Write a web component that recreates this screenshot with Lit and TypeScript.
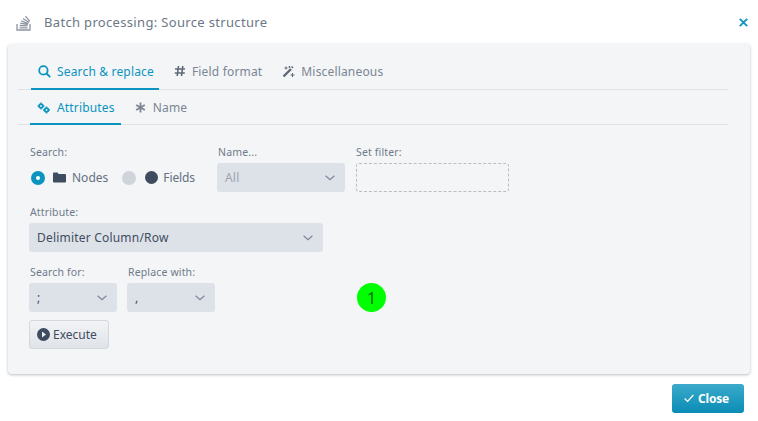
import { LitElement, html, css } from "lit";
import { customElement } from "lit/decorators.js";

const chev = html`<svg class="chev" width="10" height="6" viewBox="0 0 10 6"><path d="M.6.8L5 4.800 9.400.8" fill="none" stroke="#7d8797" stroke-width="1.200"/></svg>`;

@customElement("app-root")
export class AppRoot extends LitElement {
  static styles = css`
    :host { display: block; width: 758px; height: 421px; background: #fff; font-family: "Noto Sans", "Open Sans", sans-serif; color: #3f4b5e; position: relative; overflow: hidden; }
    .head { height: 44px; box-sizing: border-box; display: flex; align-items: center; padding: 0 10px 0 16px; }
    .head .logo { margin-right: 12px; }
    .title { font-size: 13px; letter-spacing: 0.33px; color: #6d7786; flex: 1; }
    .panel { margin: 0 8px; height: 330px; box-sizing: border-box; background: #f3f5f7; border-radius: 4px; box-shadow: 0 1px 3px rgba(60,70,90,.35); padding: 10px 22px 0 10px; }
    .tabs { display: flex; border-bottom: 1px solid #dfe3e8; }
    .tabs.main { height: 35px; padding-left: 13px; }
    .tabs.sub { height: 34px; padding-left: 12px; }
    .tab { display: flex; align-items: center; gap: 6px; font-size: 12px; letter-spacing: .17px; color: #7b8593; padding: 0 5px 0 7px; margin-bottom: -1px; border-bottom: 2px solid transparent; box-sizing: border-box; }
    .tabs.main .tab + .tab { margin-left: 8px; }
    .tabs.sub .tab { gap: 7px; padding: 2px 6px 0 7px; }
    .tabs.sub .tab + .tab { margin-left: 7px; }
    .tab.on { color: #0a94bf; border-bottom-color: #0a94bf; }
    .form { padding: 20px 0 0 11px; font-size: 11px; color: #707a89; }
    .row { display: flex; align-items: flex-start; }
    .field { display: flex; flex-direction: column; }
    label { font-size: 10.5px; letter-spacing: .15px; line-height: 14px; height: 14px; padding-left: 1px; margin-bottom: 4px; display: block; color: #707a89; }
    label.flush { padding-left: 0; }
    .sel { height: 29px; box-sizing: border-box; background: #dde1e8; border-radius: 3px; display: flex; align-items: center; justify-content: space-between; padding: 0 10px 0 8px; font-size: 12px; color: #414d60; letter-spacing: .2px; }
    .sel.dis { color: #9ca4b0; }
    .radios { display: flex; align-items: center; height: 29px; width: 188px; font-size: 12px; color: #66707f; padding-left: 2px; box-sizing: border-box; }
    .radio { width: 14px; height: 14px; border-radius: 50%; background: #cfd3da; flex: none; }
    .radio.on { background: #0a94bf; display: flex; align-items: center; justify-content: center; }
    .radio.on::after { content: ""; width: 4px; height: 4px; border-radius: 50%; background: #fff; }
    .folder { margin: 0 6px 0 8px; }
    .dot { margin: 0 5px 0 9px; }
    .radio.second { margin-left: 14px; }
    .fields { letter-spacing: -.1px; }
    .filter { width: 153px; height: 29px; box-sizing: border-box; border: 1px dashed #b9bec6; border-radius: 3px; }
    .btn { margin-top: 8px; width: 80px; height: 29px; box-sizing: border-box; border: 1px solid #d3d8df; border-radius: 3px; background: linear-gradient(#f2f4f6, #dfe3e8); display: flex; align-items: center; padding-left: 7px; gap: 3px; font-size: 12px; color: #3f4b5e; }
    .gap13 { margin-top: 13px; }
    .gap10 { gap: 10px; }
    .mr11 { margin-right: 11px; }
    .w127 { width: 128px; }
    .w294 { width: 294px; }
    .w88 { width: 88px; }
    .foot { display: flex; justify-content: flex-end; padding: 10px 14px 0 0; }
    .close { width: 72px; height: 29px; box-sizing: border-box; border-radius: 3px; background: linear-gradient(#3caacb, #0a8cb6); color: #fff; font-size: 12px; font-weight: 700; letter-spacing: -.2px; display: flex; align-items: center; padding-left: 12px; gap: 4px; }
    .badge { position: absolute; left: 357px; top: 283px; width: 29px; height: 29px; border-radius: 50%; background: #00ff00; color: #0a6b0a; font-size: 16px; display: flex; align-items: center; justify-content: center; }
  `;
  render() {
    return html`
      <div class="head">
        <svg class="logo" width="16" height="17" viewBox="0 0 16 17" fill="none" stroke="#8d95a2" stroke-width="1.300">
          <path d="M1 10v6h13v-6"/><path d="M3.500 13.800h8M3.700 11.500l7.800.4M4.200 9.200l7.600 1.300M5.300 6.800l7 2.800M7 4.500l6.200 4M9.500 2.200l4.300 5.200"/>
        </svg>
        <span class="title">Batch processing: Source structure</span>
        <svg width="9" height="9" viewBox="0 0 9 9"><path d="M.8.8l7.400 7.400M8.200.8L.8 8.200" stroke="#0a94bf" stroke-width="1.800"/></svg>
      </div>
      <div class="panel">
        <div class="tabs main">
          <div class="tab on">
            <svg width="13" height="13" viewBox="0 0 13 13" fill="none" stroke="#0a94bf" stroke-width="1.800"><circle cx="5.400" cy="5.400" r="4.200"/><path d="M8.500 8.500l3.700 3.700"/></svg>
            Search &amp; replace
          </div>
          <div class="tab">
            <svg width="12" height="12" viewBox="0 0 12 12" fill="none" stroke="#5f6977" stroke-width="1.600"><path d="M4.500 1L3.200 11M8.800 1L7.500 11M1 4h10M.8 8h10"/></svg>
            Field format
          </div>
          <div class="tab">
            <svg width="13" height="13" viewBox="0 0 13 13" fill="none" stroke="#5f6977"><path d="M1.500 11.500l7.500-7.500" stroke-width="2.400"/><path d="M9.800 2.700l1-1" stroke-width="2"/><path d="M2.500 3h3M4 1.500v3M7.500 1v2M6.500 2h2M10.500 8v4M8.500 10h4" stroke-width="1"/></svg>
            Miscellaneous
          </div>
        </div>
        <div class="tabs sub">
          <div class="tab on">
            <svg width="13" height="12" viewBox="0 0 13 12" fill="none" stroke="#0a94bf"><circle cx="4" cy="4" r="1.800" stroke-width="1.800"/><circle cx="9.500" cy="8" r="1.800" stroke-width="1.800"/><path d="M4 .6v1.200M4 6.200v1.200M.6 4h1.200M6.200 4h1.200M9.500 4.600v1.200M9.500 10.200v1.200M6.100 8h1.200M11.700 8h1.200" stroke-width="1.400"/></svg>
            Attributes
          </div>
          <div class="tab">
            <svg width="11" height="11" viewBox="0 0 11 11" fill="none" stroke="#7b8593" stroke-width="1.800"><path d="M5.500.5v10M1.200 3l8.600 5M9.800 3l-8.600 5"/></svg>
            Name
          </div>
        </div>
        <div class="form">
          <div class="row">
            <div class="field">
              <label>Search:</label>
              <div class="radios">
                <span class="radio on"></span>
                <svg class="folder" width="13" height="11" viewBox="0 0 13 11"><path d="M0 1.500q0-1 1-1h3.500l1.200 1.500H12q1 0 1 1v6.500q0 1-1 1H1q-1 0-1-1z" fill="#3f4b5e"/></svg>
                <span>Nodes</span>
                <span class="radio second"></span>
                <svg class="dot" width="13" height="13" viewBox="0 0 13 13"><circle cx="6.500" cy="6.500" r="6.500" fill="#3f4b5e"/></svg>
                <span class="fields">Fields</span>
              </div>
            </div>
            <div class="field mr11">
              <label>Name...</label>
              <div class="sel dis w127"><span>All</span>${chev}</div>
            </div>
            <div class="field">
              <label class="flush">Set filter:</label>
              <div class="filter"></div>
            </div>
          </div>
          <div class="row gap13">
            <div class="field">
              <label>Attribute:</label>
              <div class="sel w294"><span>Delimiter Column/Row</span>${chev}</div>
            </div>
          </div>
          <div class="row gap13 gap10">
            <div class="field">
              <label>Search for:</label>
              <div class="sel w88"><span>;</span>${chev}</div>
            </div>
            <div class="field">
              <label>Replace with:</label>
              <div class="sel w88"><span>,</span>${chev}</div>
            </div>
          </div>
          <div class="btn">
            <svg width="13" height="13" viewBox="0 0 13 13"><circle cx="6.500" cy="6.500" r="6.500" fill="#3f4b5e"/><path d="M5 3.500l4 3-4 3z" fill="#eef0f3"/></svg>
            <span>Execute</span>
          </div>
        </div>
      </div>
      <div class="foot">
        <div class="close">
          <svg width="10" height="9" viewBox="0 0 10 9" fill="none" stroke="#fff" stroke-width="1.200"><path d="M.6 4.500l3 3L9.400 1"/></svg>
          Close
        </div>
      </div>
      <div class="badge">1</div>
    `;
  }
}
